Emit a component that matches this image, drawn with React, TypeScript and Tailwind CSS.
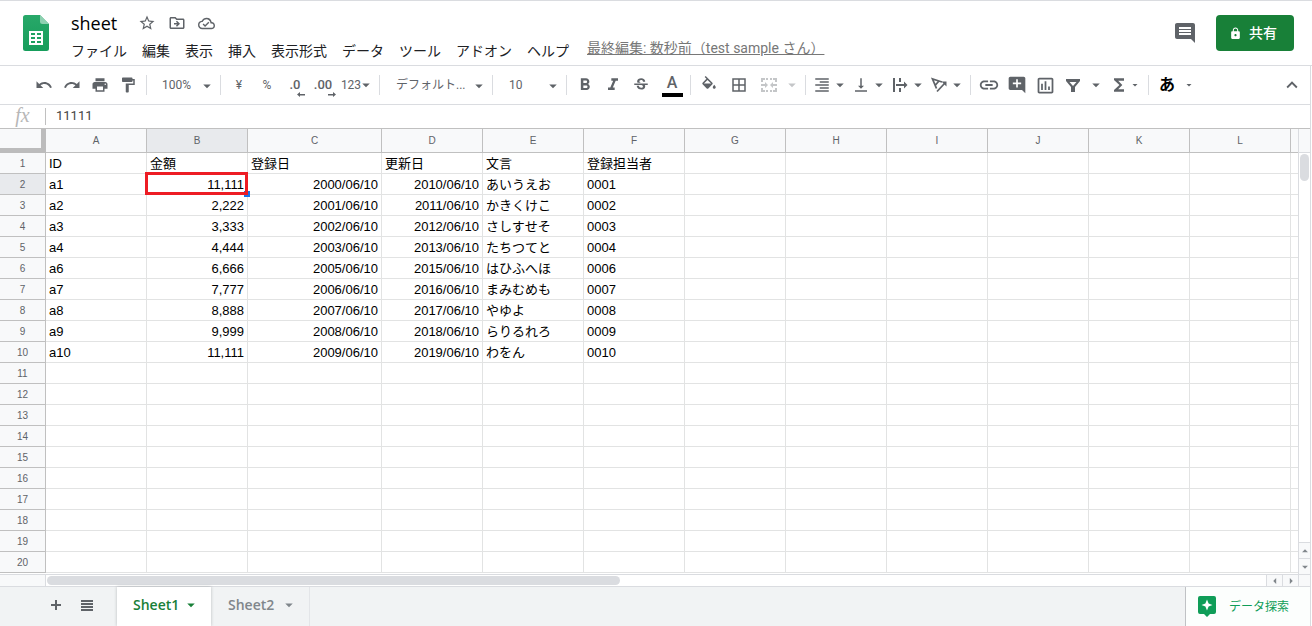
import { useState } from 'react';
import type { ReactNode } from 'react';
import clsx from 'clsx';
import {
  MdAddComment,
  MdArrowDropDown,
  MdArrowDropUp,
  MdArrowLeft,
  MdArrowRight,
  MdBorderAll,
  MdComment,
  MdExpandLess,
  MdFormatAlignRight,
  MdFormatBold,
  MdFormatItalic,
  MdFormatPaint,
  MdFunctions,
  MdLink,
  MdLock,
  MdOutlineCloudDone,
  MdOutlineDriveFileMove,
  MdOutlineInsertChart,
  MdPrint,
  MdRedo,
  MdStarBorder,
  MdStrikethroughS,
  MdUndo,
  MdVerticalAlignBottom,
} from 'react-icons/md';

const MENUS = ['ファイル', '編集', '表示', '挿入', '表示形式', 'データ', 'ツール', 'アドオン', 'ヘルプ'];

const COLUMNS = ['A', 'B', 'C', 'D', 'E', 'F', 'G', 'H', 'I', 'J', 'K', 'L'];

const ROWS = [
  ['ID', '金額', '登録日', '更新日', '文言', '登録担当者'],
  ['a1', '11,111', '2000/06/10', '2010/06/10', 'あいうえお', '0001'],
  ['a2', '2,222', '2001/06/10', '2011/06/10', 'かきくけこ', '0002'],
  ['a3', '3,333', '2002/06/10', '2012/06/10', 'さしすせそ', '0003'],
  ['a4', '4,444', '2003/06/10', '2013/06/10', 'たちつてと', '0004'],
  ['a6', '6,666', '2005/06/10', '2015/06/10', 'はひふへほ', '0006'],
  ['a7', '7,777', '2006/06/10', '2016/06/10', 'まみむめも', '0007'],
  ['a8', '8,888', '2007/06/10', '2017/06/10', 'やゆよ', '0008'],
  ['a9', '9,999', '2008/06/10', '2018/06/10', 'らりるれろ', '0009'],
  ['a10', '11,111', '2009/06/10', '2019/06/10', 'わをん', '0010'],
];

const ROW_COUNT = 20;

function SheetsLogo() {
  return (
    <svg width="26" height="36" viewBox="0 0 26 36" aria-hidden="true">
      <defs>
        <linearGradient id="logo" x1="0" y1="0" x2="0" y2="1">
          <stop offset="0" stopColor="#28a869" />
          <stop offset="1" stopColor="#169d5b" />
        </linearGradient>
      </defs>
      <path d="M2.5 0H17l9 9v24.5a2.5 2.5 0 0 1-2.5 2.5h-21A2.5 2.5 0 0 1 0 33.5v-31A2.5 2.5 0 0 1 2.5 0z" fill="url(#logo)" />
      <path d="M17 0l9 9h-6.5A2.5 2.5 0 0 1 17 6.5z" fill="#8ed1b1" />
      <path
        d="M6 16h14v14H6zM8 18v2h4v-2zm6 0v2h4v-2zm-6 4v2h4v-2zm6 0v2h4v-2zm-6 4v2h4v-2zm6 0v2h4v-2z"
        fill="#fff"
        fillRule="evenodd"
      />
    </svg>
  );
}

function FillIcon() {
  return (
    <svg width="18" height="18" viewBox="0 0 24 24" fill="currentColor" aria-hidden="true">
      <path d="M16.56 8.94L7.62 0 6.21 1.41l2.38 2.38-5.15 5.15c-.59.59-.59 1.54 0 2.12l5.5 5.5c.29.29.68.44 1.06.44s.77-.15 1.06-.44l5.5-5.5c.59-.58.59-1.53 0-2.12zM5.21 10L10 5.21 14.79 10H5.21zM19 11.5s-2 2.17-2 3.5c0 1.1.9 2 2 2s2-.9 2-2c0-1.33-2-3.5-2-3.5z" />
    </svg>
  );
}

function MergeIcon() {
  return (
    <svg width="18" height="18" viewBox="0 0 18 18" fill="currentColor" aria-hidden="true">
      <path d="M1 2h4v2H3v2H1zM6 2h2v2H6zM10 2h2v2h-2zM13 2h4v4h-2V4h-2zM1 12h2v2h2v2H1zM6 14h2v2H6zM10 14h2v2h-2zM15 12h2v4h-4v-2h2z" />
      <path d="M1 8h4V6l3 3-3 3v-2H1zM17 8h-4V6l-3 3 3 3v-2h4z" />
    </svg>
  );
}

function WrapIcon() {
  return (
    <svg width="18" height="18" viewBox="0 0 18 18" fill="currentColor" aria-hidden="true">
      <path d="M2 2h2v14H2zM8 2h2v4H8zM8 12h2v4H8zM5 8h8V5.5L16.5 9 13 12.5V10H5z" />
    </svg>
  );
}

function RotateIcon() {
  return (
    <svg width="18" height="18" viewBox="0 0 18 18" fill="none" stroke="currentColor" aria-hidden="true">
      <path d="M12 6L2.500 3l4 9.500M9 5l-4 4.500" strokeWidth="1.800" />
      <path d="M7 15.500L15 7" strokeWidth="1.800" />
      <path d="M16.500 5.500v5l-5-5z" fill="currentColor" stroke="none" />
    </svg>
  );
}

function FilterIcon() {
  return (
    <svg width="18" height="18" viewBox="0 0 18 18" fill="currentColor" aria-hidden="true">
      <path d="M2 3h14v2l-5 6v5H7v-5L2 5zM5.500 6L9 10l3.500-4z" fillRule="evenodd" />
    </svg>
  );
}

function ExploreIcon() {
  return (
    <svg width="18" height="21" viewBox="0 0 18 21" aria-hidden="true">
      <path d="M2 0h14a2 2 0 0 1 2 2v14a2 2 0 0 1-2 2h-4l-3 3-3-3H2a2 2 0 0 1-2-2V2a2 2 0 0 1 2-2z" fill="#0f9d58" />
      <path d="M9 3.5l1.6 3.9L14.5 9l-3.9 1.6L9 14.5l-1.6-3.9L3.5 9l3.9-1.6z" fill="#fff" />
    </svg>
  );
}

interface ToolButtonProps {
  label: string;
  children: ReactNode;
  className?: string;
}

function ToolButton({ label, children, className }: ToolButtonProps) {
  return (
    <button
      type="button"
      aria-label={label}
      className={clsx('flex h-7 w-7 shrink-0 items-center justify-center rounded-sm hover:bg-gray-100', className)}
    >
      {children}
    </button>
  );
}

function MenuToolButton({ label, children }: ToolButtonProps) {
  return (
    <button
      type="button"
      aria-label={label}
      className="flex h-7 w-[39px] shrink-0 items-center justify-end rounded-sm hover:bg-gray-100"
    >
      {children}
      <MdArrowDropDown size={18} />
    </button>
  );
}

function Separator() {
  return <div className="mx-1 h-5 w-px shrink-0 bg-[#dadce0]" />;
}

function ToolSelect({ label, value, className }: { label: string; value: string; className: string }) {
  return (
    <div className={clsx('relative shrink-0', className)}>
      <select aria-label={label} defaultValue={value} className="h-7 w-full appearance-none bg-transparent px-2 text-xs outline-none">
        <option>{value}</option>
      </select>
      <MdArrowDropDown size={18} className="pointer-events-none absolute top-[6px] right-0" />
    </div>
  );
}

function DecimalButton({ label, text, increase }: { label: string; text: string; increase?: boolean }) {
  return (
    <ToolButton label={label}>
      <span className="flex flex-col pt-1">
        <span className="text-[13px] leading-[14px] font-medium">{text}</span>
        <svg width="8" height="5" viewBox="0 0 8 5" fill="currentColor" className="-mr-1 self-end" aria-hidden="true">
          <path d={increase ? 'M0 2h5V0l3 2.5L5 5V3.5H0z' : 'M8 2H3V0L0 2.5 3 5V3.5h5z'} />
        </svg>
      </span>
    </ToolButton>
  );
}

function Header() {
  return (
    <header className="flex h-[66px] items-start border-y border-[#dadce0] pt-[14px] pr-[18px] pl-[23px]">
      <SheetsLogo />
      <div className="-mt-px ml-[22px] flex flex-col">
        <div className="flex h-[18px] items-center text-[#5f6368]">
          <h1 className="mr-[21px] font-['Open_Sans',sans-serif] text-lg text-black">sheet</h1>
          <div className="flex items-center gap-3">
            <button type="button" aria-label="スター">
              <MdStarBorder size={18} />
            </button>
            <button type="button" aria-label="移動">
              <MdOutlineDriveFileMove size={18} />
            </button>
            <button type="button" aria-label="保存状態">
              <MdOutlineCloudDone size={17} />
            </button>
          </div>
        </div>
        <div className="mt-[9px] flex">
          <nav className="flex gap-[15px]">
            {MENUS.map((menu) => (
              <button key={menu} type="button" className="text-sm whitespace-nowrap text-[#202124]">
                {menu}
              </button>
            ))}
          </nav>
          <a href="#history" className="-mt-[3px] ml-[18px] text-sm whitespace-nowrap text-[#777] underline">
            最終編集: 数秒前（test sample さん）
          </a>
        </div>
      </div>
      <div className="ml-auto flex items-center gap-[19px]">
        <button type="button" aria-label="コメント" className="text-[#5f6368]">
          <MdComment size={24} />
        </button>
        <button
          type="button"
          className="flex h-9 w-[78px] items-center justify-center gap-[7px] rounded bg-[#188038] pr-1 text-sm font-medium text-white"
        >
          <MdLock size={13} />
          共有
        </button>
      </div>
    </header>
  );
}

function Toolbar() {
  return (
    <div role="toolbar" className="flex h-[39px] items-center border-b border-[#dadce0] pl-[30px] text-xs text-[#5f6368]">
      <ToolButton label="元に戻す">
        <MdUndo size={18} />
      </ToolButton>
      <ToolButton label="やり直し">
        <MdRedo size={18} />
      </ToolButton>
      <ToolButton label="印刷">
        <MdPrint size={18} />
      </ToolButton>
      <ToolButton label="書式を貼り付け">
        <MdFormatPaint size={18} />
      </ToolButton>
      <Separator />
      <ToolSelect label="ズーム" value="100%" className="ml-[3px] w-[62px]" />
      <Separator />
      <ToolButton label="通貨">¥</ToolButton>
      <ToolButton label="パーセント">%</ToolButton>
      <DecimalButton label="小数点以下の桁数を減らす" text=".0" />
      <DecimalButton label="小数点以下の桁数を増やす" text=".00" increase />
      <button type="button" className="flex h-7 w-[38px] shrink-0 items-center justify-center rounded-sm hover:bg-gray-100">
        123
        <MdArrowDropDown size={18} className="-mx-1" />
      </button>
      <Separator />
      <ToolSelect label="フォント" value="デフォルト..." className="ml-1 w-[100px]" />
      <Separator />
      <ToolSelect label="フォントサイズ" value="10" className="ml-1 w-[61px]" />
      <Separator />
      <ToolButton label="太字">
        <MdFormatBold size={20} />
      </ToolButton>
      <ToolButton label="斜体">
        <MdFormatItalic size={20} />
      </ToolButton>
      <ToolButton label="取り消し線">
        <MdStrikethroughS size={18} />
      </ToolButton>
      <ToolButton label="テキストの色" className="ml-[3px] flex-col">
        <span className="text-base leading-5 font-medium">A</span>
        <span className="h-1 w-[21px] bg-black" />
      </ToolButton>
      <Separator />
      <ToolButton label="塗りつぶしの色">
        <FillIcon />
      </ToolButton>
      <ToolButton label="枠線" className="ml-[2px]">
        <MdBorderAll size={18} />
      </ToolButton>
      <div className="ml-[2px] flex items-center text-[#c4c6c8]">
        <ToolButton label="セルを結合">
          <MergeIcon />
        </ToolButton>
        <MdArrowDropDown size={18} />
      </div>
      <Separator />
      <MenuToolButton label="水平方向の配置">
        <MdFormatAlignRight size={18} />
      </MenuToolButton>
      <MenuToolButton label="垂直方向の配置">
        <MdVerticalAlignBottom size={18} />
      </MenuToolButton>
      <MenuToolButton label="テキストの折り返し">
        <WrapIcon />
      </MenuToolButton>
      <MenuToolButton label="テキストの回転">
        <RotateIcon />
      </MenuToolButton>
      <Separator />
      <ToolButton label="リンクを挿入">
        <MdLink size={22} />
      </ToolButton>
      <ToolButton label="コメントを挿入">
        <MdAddComment size={20} />
      </ToolButton>
      <ToolButton label="グラフを挿入">
        <MdOutlineInsertChart size={21} />
      </ToolButton>
      <ToolButton label="フィルタを作成">
        <FilterIcon />
      </ToolButton>
      <MdArrowDropDown size={18} />
      <ToolButton label="関数">
        <MdFunctions size={20} />
      </ToolButton>
      <MdArrowDropDown size={12} className="mr-[3px] -ml-1" />
      <Separator />
      <ToolButton label="入力ツール" className="text-base font-bold text-black">
        あ
      </ToolButton>
      <MdArrowDropDown size={12} className="ml-[2px]" />
      <ToolButton label="メニューを非表示" className="mr-1 ml-auto">
        <MdExpandLess size={22} />
      </ToolButton>
    </div>
  );
}

function FormulaBar() {
  const [value, setValue] = useState('11111');

  return (
    <div className="flex h-6 items-center border-b border-[#c0c0c0]">
      <label htmlFor="formula" className="w-[45px] pb-1 text-center font-['Liberation_Serif',serif] text-xl leading-5 text-[#b7b7b7] italic">
        fx
      </label>
      <div className="h-[17px] w-px bg-[#c0c0c0]" />
      <input
        id="formula"
        value={value}
        onChange={(e) => setValue(e.target.value)}
        className="h-5 flex-1 px-[10px] pb-[2px] text-[13px] text-[#444] outline-none"
      />
    </div>
  );
}

function Grid() {
  return (
    <table className="w-full table-fixed border-separate border-spacing-0 font-['Liberation_Sans','Noto_Sans_CJK_JP',sans-serif]">
      <colgroup>
        <col className="w-[46px]" />
        {COLUMNS.map((name) => (
          <col key={name} className={name === 'C' ? 'w-[134px]' : 'w-[101px]'} />
        ))}
        <col />
      </colgroup>
      <thead>
        <tr className="h-6 text-[10px] text-[#5f6368]">
          <td className="border-r-[5px] border-b-[5px] border-[#bcbcbc] bg-[#f8f9fa]" />
          {COLUMNS.map((name) => (
            <th
              key={name}
              scope="col"
              className={clsx(
                'border-r border-b border-[#c0c0c0] p-0 font-normal',
                name === 'B' ? 'bg-[#e8eaed]' : 'bg-[#f8f9fa]',
              )}
            >
              {name}
            </th>
          ))}
          <td className="border-b border-[#c0c0c0] bg-[#f8f9fa]" />
        </tr>
      </thead>
      <tbody>
        {Array.from({ length: ROW_COUNT }, (_, row) => (
          <tr key={row} className="h-[21px]">
            <th
              scope="row"
              className={clsx(
                'border-r border-b border-[#c0c0c0] px-0 pt-[2px] pb-0 text-[10px] leading-[18px] font-normal text-[#5f6368]',
                row === 1 ? 'bg-[#e8eaed]' : 'bg-[#f8f9fa]',
              )}
            >
              {row + 1}
            </th>
            {COLUMNS.map((name, col) => (
              <td
                key={name}
                className={clsx(
                  'relative border-r border-b border-[#e2e3e3] px-[3px] pt-[2px] pb-0 text-[13px] leading-[18px] whitespace-nowrap text-black',
                  row > 0 && col > 0 && col < 4 && 'text-right',
                )}
              >
                {ROWS[row]?.[col]}
                {row === 1 && col === 1 && (
                  <>
                    <span className="absolute -right-[3px] -bottom-[3px] z-10 h-[6px] w-[6px] bg-[#1a73e8]" />
                    <span className="absolute -top-[2px] -right-px -bottom-px -left-[2px] z-20 border-[3px] border-[#ed1c24]" />
                  </>
                )}
              </td>
            ))}
            <td className="border-b border-[#e2e3e3] p-0" />
          </tr>
        ))}
      </tbody>
    </table>
  );
}

function VerticalScrollbar() {
  return (
    <div className="flex w-3 shrink-0 flex-col border-l border-[#dadce0] text-[#80868b]">
      <div className="h-6 border-b border-[#dadce0] bg-[#f8f9fa]" />
      <div className="mx-px mt-px h-[27px] rounded-full bg-[#dadce0]" />
      <button type="button" aria-label="上へ" className="mt-auto flex h-4 items-center justify-center border-t border-[#dadce0] bg-[#f8f9fa]">
        <MdArrowDropUp size={14} className="shrink-0" />
      </button>
      <button type="button" aria-label="下へ" className="flex h-4 items-center justify-center border-t border-[#dadce0] bg-[#f8f9fa]">
        <MdArrowDropDown size={14} className="shrink-0" />
      </button>
    </div>
  );
}

function HorizontalScrollbar() {
  return (
    <div className="flex h-[13px] border-y border-[#dadce0] text-[#80868b]">
      <div className="w-[46px] border-r border-[#dadce0] bg-[#f8f9fa]" />
      <div className="flex flex-1 py-px pl-px">
        <div className="w-[47%] rounded-full bg-[#dadce0]" />
      </div>
      <button type="button" aria-label="左へ" className="flex w-4 items-center justify-center border-l border-[#dadce0] bg-[#f8f9fa]">
        <MdArrowLeft size={14} className="shrink-0" />
      </button>
      <button type="button" aria-label="右へ" className="flex w-4 items-center justify-center border-l border-[#dadce0] bg-[#f8f9fa]">
        <MdArrowRight size={14} className="shrink-0" />
      </button>
      <div className="w-3 border-l border-[#dadce0] bg-[#f8f9fa]" />
    </div>
  );
}

function SheetTabs() {
  return (
    <footer className="flex h-[39px] bg-[#f1f3f4] font-['Open_Sans',sans-serif] text-sm font-semibold">
      <div className="flex w-[117px] items-center pb-[3px] pl-[47px] text-[#5f6368]">
        <button type="button" aria-label="シートを追加">
          <svg width="18" height="18" viewBox="0 0 18 18" fill="currentColor" aria-hidden="true">
            <path d="M8 4h2v4h4v2h-4v4H8v-4H4V8h4z" />
          </svg>
        </button>
        <button type="button" aria-label="すべてのシート" className="ml-[13px]">
          <svg width="18" height="18" viewBox="0 0 18 18" fill="currentColor" aria-hidden="true">
            <path d="M3 4h12v2H3zM3 7h12v2H3zM3 10h12v2H3zM3 13h12v2H3z" />
          </svg>
        </button>
      </div>
      <button
        type="button"
        className="flex w-[94px] items-center justify-between bg-white pr-[11px] pb-[3px] pl-4 text-[#188038] shadow-[0_0_3px_rgba(60,64,67,0.3)]"
      >
        Sheet1
        <MdArrowDropDown size={18} />
      </button>
      <button
        type="button"
        className="flex w-[99px] items-center justify-between border-r border-[#e3e5e8] pr-[11px] pb-[3px] pl-[17px] text-[#80868b]"
      >
        Sheet2
        <MdArrowDropDown size={18} />
      </button>
      <button
        type="button"
        className="ml-auto flex w-[125px] items-center border-l border-[#c0c2c5] bg-[#fcfefd] pl-3 font-[Roboto,'Noto_Sans_CJK_JP',sans-serif] text-xs font-normal text-[#0f9d58]"
      >
        <ExploreIcon />
        <span className="ml-[13px]">データ探索</span>
      </button>
    </footer>
  );
}

export default function App() {
  return (
    <div className="min-h-screen overflow-hidden bg-white font-[Roboto,'Noto_Sans_CJK_JP',sans-serif]">
      <Header />
      <main className="mr-px border-r border-[#dadce0]">
        <Toolbar />
        <FormulaBar />
        <div className="flex">
          <div className="min-w-0 flex-1 pb-px">
            <Grid />
          </div>
          <VerticalScrollbar />
        </div>
        <HorizontalScrollbar />
        <SheetTabs />
      </main>
    </div>
  );
}
